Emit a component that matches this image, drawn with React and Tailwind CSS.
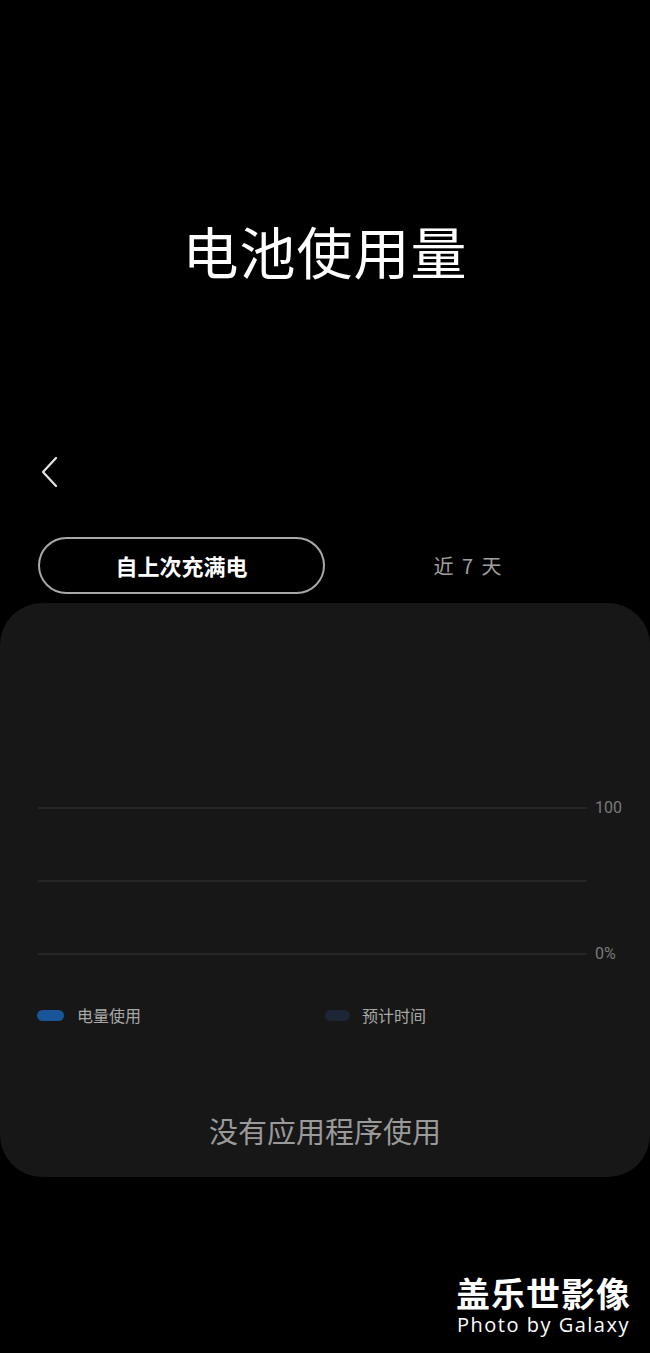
const cjk = { fontFamily: '"Noto Sans CJK SC", "Noto Sans", sans-serif' };
const num = { fontFamily: 'Roboto, "Noto Sans", sans-serif' };

function GridLine({ label }) {
  return (
    <div className="flex items-center h-[20px]">
      <div className="ml-[38px] w-[549px] h-[2px] bg-[#262626]" />
      {label && (
        <span className="ml-[8px] text-[16px] text-[#7a7a7a]" style={num}>
          {label}
        </span>
      )}
    </div>
  );
}

export default function App() {
  return (
    <div className="w-[650px] h-[1353px] bg-black flex flex-col text-white" style={cjk}>
      {/* Title */}
      <div className="h-[200px]" />
      <h1 className="text-center text-[56px] leading-[100px] font-normal tracking-[1px]">
        电池使用量
      </h1>

      {/* Back */}
      <div className="mt-[156px] pl-[40px] h-[32px]">
        <svg width="20" height="32" viewBox="0 0 20 32" fill="none">
          <path d="M16 2 L3 16 L16 30" stroke="#e5e5e5" strokeWidth="2.2" strokeLinecap="round" strokeLinejoin="round" />
        </svg>
      </div>

      {/* Tabs */}
      <div className="mt-[49px] flex items-center">
        <div className="ml-[38px] w-[287px] h-[57px] rounded-full border-2 border-[#a8a8a8] flex items-center justify-center text-[22px] font-bold">
          自上次充满电
        </div>
        <div className="flex-1 flex justify-center pr-[38px] text-[20px] text-[#a0a0a0] tracking-[2px]">
          近 7 天
        </div>
      </div>

      {/* Card */}
      <div className="mt-[9px] h-[574px] bg-[#171717] rounded-[42px] flex flex-col">
        <div className="h-[195px]" />
        <GridLine label="100" />
        <div className="h-[53px]" />
        <GridLine />
        <div className="h-[53px]" />
        <GridLine label="0%" />

        <div className="mt-[39px] flex items-center text-[16px] text-[#a8a8a8]">
          <div className="ml-[37px] w-[27px] h-[11px] rounded-full bg-[#1a5597]" />
          <span className="ml-[13px]">电量使用</span>
          <div className="ml-[184px] w-[25px] h-[11px] rounded-full bg-[#1c2636]" />
          <span className="ml-[12px]">预计时间</span>
        </div>

        <div className="mt-[82px] text-center text-[29px] text-[#9a9a9a]">
          没有应用程序使用
        </div>
      </div>

      {/* Watermark */}
      <div className="mt-[96px] self-end mr-[19px] flex flex-col items-center">
        <div className="text-[34px] font-bold leading-[40px] tracking-[1px]">盖乐世影像</div>
        <div className="text-[20px] leading-[24px] tracking-[1.5px]" style={{ fontFamily: '"Open Sans", Lato, sans-serif' }}>
          Photo by Galaxy
        </div>
      </div>
    </div>
  );
}
